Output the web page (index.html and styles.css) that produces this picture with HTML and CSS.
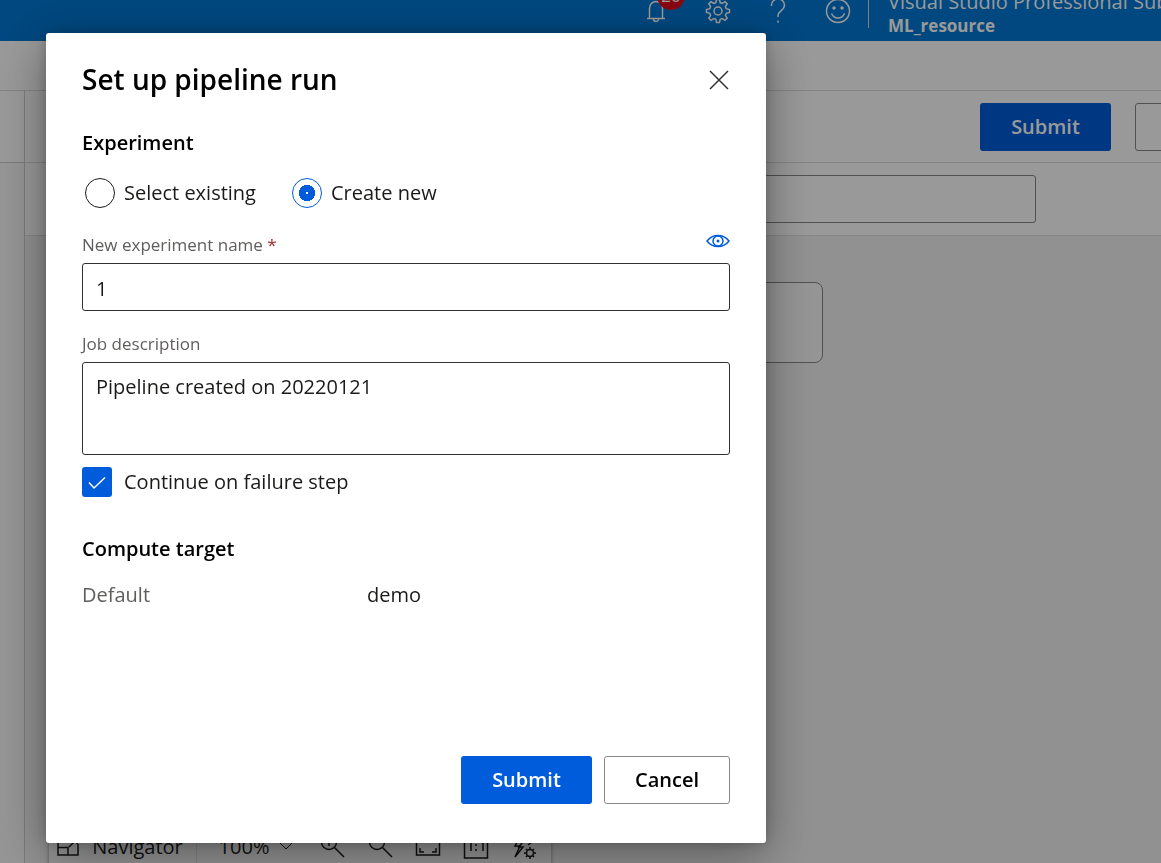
FILE: index.html
```html
<!DOCTYPE html>
<html lang="en">
<head>
<meta charset="utf-8">
<title>Set up pipeline run</title>
<link rel="stylesheet" href="styles.css">
</head>
<body>
<div class="app">
  <header class="topbar">
    <button class="top-icon" aria-label="Notifications">
      <svg width="30" height="30" viewBox="0 0 30 30"><path d="M4 22.500h18M6.500 22V12.500c0-4 2.800-7 6.500-7s6.500 3 6.500 7V22M10.500 23a2.500 2.500 0 0 0 5 0"/></svg>
      <span class="badge">20</span>
    </button>
    <button class="top-icon" aria-label="Settings">
      <svg width="30" height="30" viewBox="0 0 30 30"><path d="M13.500 3.500h3l.7 3.200 2 .8 2.800-1.800 2.200 2.200-1.800 2.800.8 2 3.300.8v3l-3.300.8-.8 2 1.800 2.800-2.200 2.200-2.800-1.800-2 .8-.7 3.200h-3l-.7-3.200-2-.8L8 24.300l-2.200-2.200 1.800-2.800-.8-2-3.300-.8v-3l3.300-.8.8-2-1.800-2.800L8 5.700l2.800 1.800 2-.8z"/><circle cx="15" cy="15" r="4"/></svg>
    </button>
    <button class="top-icon" aria-label="Help">
      <svg width="30" height="30" viewBox="0 0 30 30"><path d="M8.500 10V9c0-3.500 2.800-6 6.500-6s6.500 2.500 6.500 6c0 2.800-1.500 4.200-3.500 5.800-2 1.500-3 2.700-3 5V21M15 24.500v2.200"/></svg>
    </button>
    <button class="top-icon" aria-label="Feedback">
      <svg width="30" height="30" viewBox="0 0 30 30"><circle cx="15" cy="15" r="11.500"/><path d="M8.500 17.500c1.200 2.800 3.600 4.500 6.500 4.500s5.300-1.700 6.500-4.500"/><circle class="dot" cx="11" cy="12" r="1.700"/><circle class="dot" cx="19" cy="12" r="1.700"/></svg>
    </button>
    <div class="account">
      <span>Visual Studio Professional Subscription</span>
      <strong>ML_resource</strong>
    </div>
  </header>
  <div class="crumbs"></div>
  <div class="workspace">
    <div class="rail"><div class="rail-head"></div></div>
    <main class="designer">
      <div class="actions">
        <button class="btn primary">Submit</button>
        <button class="btn clipped" aria-label="More actions"></button>
      </div>
      <div class="search"><input class="search-box" type="text" aria-label="Search"></div>
      <div class="canvas">
        <div class="node"></div>
        <div class="toolbar">
          <button class="tool nav"><svg width="24" height="24" viewBox="0 0 24 24"><path d="M11 2H2v18h20V9M2 12.500h10V20M13 12l8-8M15 3h6v6"/></svg>Navigator</button>
          <button class="tool level">100%<svg width="14" height="14" viewBox="0 0 14 14"><path d="M1 3l6 6 6-6"/></svg></button>
          <button class="tool" aria-label="Zoom in"><svg width="26" height="26" viewBox="0 0 26 26"><circle cx="10" cy="8" r="7.500"/><path d="M15.500 13.500L25 23M10 4v8M6 8h8"/></svg></button>
          <button class="tool" aria-label="Zoom out"><svg width="26" height="26" viewBox="0 0 26 26"><circle cx="10" cy="8" r="7.500"/><path d="M15.500 13.500L25 23M6 7h8"/></svg></button>
          <button class="tool" aria-label="Fit to screen"><svg width="26" height="26" viewBox="0 0 26 26"><path d="M1.500 3v18h23V3zM5 14v4h4M17 18h4v-4M5 9V6h4M17 6h4v3"/></svg></button>
          <button class="tool" aria-label="Actual size"><svg width="26" height="26" viewBox="0 0 26 26"><path d="M1.500 1.500h23v22.500h-23zM6 8l2-1v10M18 8l2-1v10M13 10v2M13 15v2"/></svg></button>
          <button class="tool" aria-label="Auto layout"><svg width="26" height="26" viewBox="0 0 26 26"><path d="M9 3L4 12h5L4 23l8-10H8l5-7M12 8h9M17 5l4 3-4 3"/><circle cx="19" cy="19" r="3.500"/><path d="M19 13v2.500M19 22.500V25M13 19h2.500M22.500 19H25M15 15l1.500 1.500M21.500 21.500L23 23M23 15l-1.500 1.500M16.500 21.500L15 23"/></svg></button>
        </div>
      </div>
    </main>
  </div>
</div>

<div class="overlay">
  <form class="dialog" role="dialog" aria-labelledby="dialog-title">
    <div class="dialog-head">
      <h1 id="dialog-title">Set up pipeline run</h1>
      <button class="close" type="button" aria-label="Close"><svg width="22" height="22" viewBox="0 0 22 22"><path d="M2 3l18 18M20 3L2 21"/></svg></button>
    </div>
    <h2>Experiment</h2>
    <div class="radios">
      <label class="choice"><input class="radio" type="radio" name="experiment">Select existing</label>
      <label class="choice"><input class="radio" type="radio" name="experiment" checked>Create new</label>
    </div>
    <div class="label-row">
      <label for="name">New experiment name <span class="required">*</span></label>
      <svg width="24" height="16" viewBox="0 0 24 16"><path d="M1 8c3-4 6.800-5.500 11-5.500S20 4 23 8c-3 4-6.800 5.500-11 5.500S4 12 1 8z"/><circle cx="12" cy="8" r="5"/><circle class="dot" cx="12" cy="8" r="1.500"/></svg>
    </div>
    <input class="field" id="name" type="text" value="1">
    <div class="label-row second"><label for="description">Job description</label></div>
    <textarea class="field description" id="description">Pipeline created on 20220121</textarea>
    <label class="choice failure">
      <span class="tick"><input class="checkbox" type="checkbox" checked><svg width="30" height="30" viewBox="0 0 30 30"><path d="M7 15.500l5 5.500L23 10.500"/></svg></span>
      Continue on failure step
    </label>
    <h2>Compute target</h2>
    <dl class="target"><dt>Default</dt><dd>demo</dd></dl>
    <div class="dialog-foot">
      <button class="btn primary" type="button">Submit</button>
      <button class="btn cancel" type="button">Cancel</button>
    </div>
  </form>
</div>
</body>
</html>
```
FILE: styles.css
```css
* { box-sizing: border-box; }
body {
  margin: 0;
  font: 20px/28px "Open Sans", "Noto Sans", sans-serif;
  color: #1b1a19;
}
button, input, textarea { font: inherit; color: inherit; }
button { padding: 0; border: 0; background: none; }
svg { display: block; flex: none; fill: none; stroke: currentColor; stroke-width: 1.500; }
.dot { fill: currentColor; stroke: none; }

.app { display: flex; flex-direction: column; height: 100vh; overflow: hidden; background: #fff; }
.topbar {
  display: flex; justify-content: flex-end; align-items: flex-end;
  height: 41px; flex: none; overflow: hidden;
  background: #0078d4; color: #fff;
}
.top-icon { position: relative; display: grid; place-items: center; width: 60px; height: 60px; flex: none; }
.badge {
  position: absolute; left: 29px; top: 1px;
  width: 28px; height: 28px; border-radius: 14px;
  background: #e00b1c; font-size: 17px; line-height: 28px;
}
.account {
  display: flex; flex-direction: column; justify-content: flex-end;
  width: 293px; height: 28px; flex: none; margin-bottom: 13px; padding-left: 19px;
  border-left: 1px solid #d0d0d0; font-size: 20px; line-height: 24px; white-space: nowrap;
}
.account strong { margin-bottom: -10px; font-size: 17px; }
.crumbs { height: 50px; flex: none; border-bottom: 1px solid #dcdcdc; }
.workspace { display: flex; flex: 1; min-height: 0; }
.rail { width: 25px; flex: none; border-right: 1px solid #ccc; background: #f8f8f8; }
.rail-head { height: 72px; border-bottom: 1px solid #ccc; background: #fff; }
.designer { display: flex; flex-direction: column; flex: 1; min-width: 0; }
.actions {
  display: flex; justify-content: flex-end; align-items: center; gap: 24px;
  height: 72px; flex: none; overflow: hidden; border-bottom: 1px solid #dcdcdc;
}
.clipped { width: 126px; flex: none; margin-right: -100px; border: 1px solid #8a8886; }
.search { height: 73px; flex: none; padding: 12px 125px 12px 24px; border-bottom: 1px solid #dcdcdc; }
.search-box { display: block; width: 100%; height: 48px; border: 1px solid #8a8886; border-radius: 3px; background: #fff; }
.canvas { position: relative; flex: 1; overflow: hidden; background: #f2f2f2; }
.node {
  position: absolute; left: 400px; top: 46px; width: 398px; height: 81px;
  border: 1px solid #8a8886; border-radius: 8px; background: #f9f9f9;
}
.toolbar {
  position: absolute; left: 24px; bottom: -8px;
  display: flex; align-items: center; width: 502px; height: 48px;
  background: #f9f9f9; box-shadow: 0 0 4px #0006;
}
.tool { display: flex; align-items: center; justify-content: center; width: 48px; height: 48px; flex: none; }
.nav { gap: 12px; width: 148px; padding-right: 6px; border-right: 1px solid #ddd; }
.level { gap: 10px; width: 111px; padding-left: 7px; }
.level svg { stroke-width: 1; }
.overlay {
  position: fixed; inset: 0; padding: 33px 46px 20px; background: #0006;
}
.dialog {
  display: flex; flex-direction: column;
  max-width: 720px; min-height: 810px; padding: 24px 36px 39px;
  border-radius: 3px; background: #fff; box-shadow: 0 0 12px #0003, 0 12px 48px #0006;
}
.dialog-head { display: flex; align-items: center; justify-content: space-between; height: 44px; }
h1, h2, dl, dd { margin: 0; font-weight: 400; }
h1 { font-size: 28px; line-height: 44px; font-weight: 600; color: #000; }
h2 { margin-top: 28px; font-size: 20px; line-height: 28px; font-weight: 600; color: #000; }
.radios { display: flex; gap: 36px; margin-top: 21px; padding-left: 3px; }
.choice { display: flex; align-items: center; gap: 9px; height: 30px; white-space: nowrap; }
.radio, .checkbox { appearance: none; width: 30px; height: 30px; flex: none; margin: 0; border: 1px solid #1b1a19; border-radius: 15px; }
.radio:checked { border-color: #005cdb; background: radial-gradient(circle, #fff 0 1px, #005cdb 1px 8px, #fff 8px); }
.label-row { display: flex; align-items: center; justify-content: space-between; height: 24px; margin: 25px 0 6px; font-size: 17px; line-height: 24px; color: #605e5c; }
.label-row svg { margin-bottom: 8px; color: #005cdb; }
.second { margin-top: 21px; }
.required { color: #a4262c; }
.field { display: block; width: 100%; height: 48px; padding: 2px 13px 0; border: 1px solid #323130; border-radius: 3px; background: #fff; }
.description { height: 93px; padding-top: 10px; resize: none; }
.failure { gap: 12px; margin-top: 12px; }
.tick { display: grid; }
.tick > * { grid-area: 1 / 1; }
.checkbox { border: 0; border-radius: 3px; background: #005cdb; }
.tick svg { color: #fff; pointer-events: none; }
.failure + h2 { margin-top: 38px; }
.target { display: grid; grid-template-columns: 285px 1fr; margin-top: 18px; }
.target dt { color: #605e5c; }
.close { color: #323130; }
.dialog-foot { display: flex; justify-content: flex-end; gap: 12px; margin-top: auto; }
.btn { height: 48px; border-radius: 3px; font-weight: 600; }
.primary { width: 131px; background: #005cdb; color: #fff; }
.cancel { width: 126px; border: 1px solid #8a8886; color: #000; }
```
